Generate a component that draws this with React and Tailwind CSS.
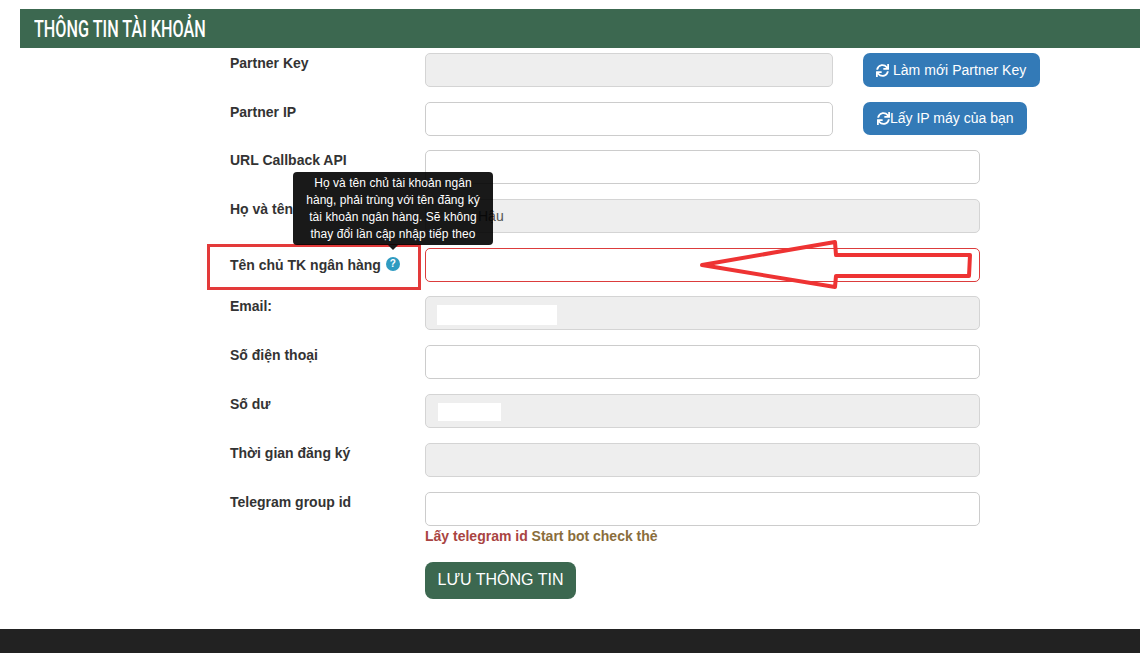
import React from "react";
import { FaSync } from "react-icons/fa";

const rows = [
  { label: "Partner Key", disabled: true, short: true, button: "Làm mới Partner Key", btnClass: "h-[34px] pl-[13px] pr-[14px] gap-[4px] tracking-[0.02px]" },
  { label: "Partner IP", short: true, button: "Lấy IP máy của bạn", btnClass: "h-[33px] pl-[14px] pr-[14px]" },
  { label: "URL Callback API", tight: true },
  { label: "Họ và tên", disabled: true, text: "Hậu" },
  { label: "Tên chủ TK ngân hàng", help: true, focus: true },
  { label: "Email:", disabled: true, tight: true, patch: "w-[120px] h-[20px] ml-[11px] mt-[4px]" },
  { label: "Số điện thoại" },
  { label: "Số dư", disabled: true, patch: "w-[63px] h-[18px] ml-[12px] mt-[2px]" },
  { label: "Thời gian đăng ký", disabled: true },
  { label: "Telegram group id" },
];

const Field = ({ row }) => {
  let cls = "h-[34px] rounded-[5px] border flex items-center text-[14px] text-[#555] ";
  cls += row.short ? "w-[408px] " : "w-[555px] ";
  if (row.focus) {
    cls += "border-[#dc3c3c] bg-white";
  } else if (row.disabled) {
    cls += "border-[#d4d4d4] bg-[#eeeeee]";
  } else {
    cls += "border-[#cccccc] bg-white";
  }
  return (
    <div className={cls}>
      {row.patch && <div className={`bg-white ${row.patch}`}></div>}
      {row.text && <span className="pl-[52px]">{row.text}</span>}
    </div>
  );
};

const App = () => {
  return (
    <div className="w-[1140px] h-[653px] bg-white overflow-hidden relative font-['Liberation_Sans',Arial,sans-serif] text-[#333]">
      <div className="mt-[9px] ml-[20px] h-[39px] bg-[#3c6850] flex items-center pl-[14px] pt-[1px]">
        <h1 className="font-['Roboto',sans-serif] text-[24px] font-medium text-white origin-left scale-x-[0.675] whitespace-nowrap">
          THÔNG TIN TÀI KHOẢN
        </h1>
      </div>

      <div className="ml-[230px] pt-[5px] flex flex-col gap-[15px]">
        {rows.map(row => (
          <div key={row.label} className={row.tight ? "flex -mt-px" : "flex"}>
            <label className="w-[195px] text-[14px] font-bold leading-[20px] flex items-start whitespace-nowrap">
              <span className={row.help ? "mt-[7px]" : ""}>{row.label}</span>
              {row.help && (
                <span className="ml-[5px] mt-[9px] w-[14px] h-[14px] rounded-full bg-[#2f9bc1] text-white text-[10px] leading-[14px] text-center">
                  ?
                </span>
              )}
            </label>
            <Field row={row} />
            {row.button && (
              <button className={`ml-[30px] rounded-[7px] bg-[#337ab7] text-white text-[14px] flex items-center ${row.btnClass}`}>
                <FaSync className="text-[13px]" />
                {row.button}
              </button>
            )}
          </div>
        ))}
      </div>

      <div className="ml-[425px]">
        <p className="text-[14px] leading-[20px] font-bold text-[#8a6d3b]">
          <span className="text-[#a94442]">Lấy telegram id</span> Start bot check thẻ
        </p>
        <button className="mt-[16px] h-[37px] w-[151px] rounded-[8px] bg-[#3c6850] text-white text-[16px] pb-[2px]">
          LƯU THÔNG TIN
        </button>
      </div>

      <div className="absolute left-0 right-0 top-[629px] h-[24px] bg-[#222222]"></div>

      {/* red box and arrow drawn over the form */}
      <div className="absolute left-[207px] top-[244px] w-[214px] h-[46px] border-[3px] border-[#e33a3a]"></div>

      <div className="absolute left-[293px] top-[172px] w-[200px] h-[73px] rounded-[4px] bg-[rgba(0,0,0,0.9)] text-white text-[12px] leading-[17px] tracking-[0.05px] text-center px-[10px] pt-[3px]">
        Họ và tên chủ tài khoản ngân hàng, phải trùng với tên đăng ký tài khoản ngân hàng. Sẽ không thay đổi lần cập nhập tiếp theo
        <div className="absolute left-1/2 -bottom-[5px] -ml-[5px] w-0 h-0 border-x-[5px] border-x-transparent border-t-[5px] border-t-[#1a1a1a]"></div>
      </div>

      <svg className="absolute left-[695px] top-[235px]" width="285" height="60" viewBox="0 0 285 60" fill="none">
        <path
          d="M7 30 L140 7 L141 20 L275 20 L274 41 L141 41 L140 52 Z"
          stroke="#ee3333"
          strokeWidth="4"
          strokeLinejoin="round"
        />
      </svg>
    </div>
  );
};

export default App;
